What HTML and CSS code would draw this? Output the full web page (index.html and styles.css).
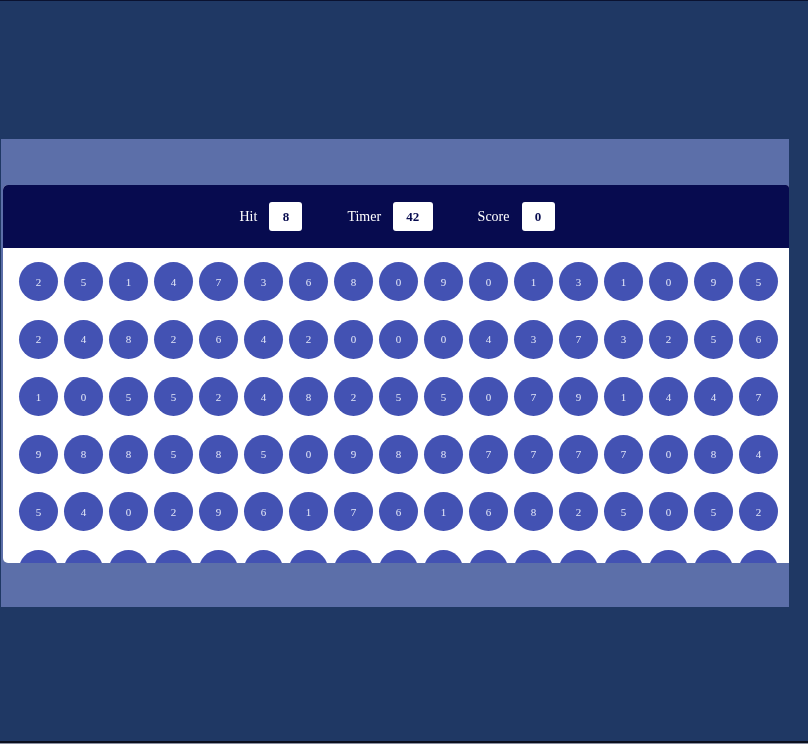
FILE: index.html
```html
<!DOCTYPE html>
<html lang="en">
<head>
  <meta charset="UTF-8">
  <title>Bubble Game</title>
  <link rel="stylesheet" href="styles.css">
</head>
<body>

  <div class="band">
    <div class="panel">
      <div class="top">
        <div class="stat">Hit <span class="val">8</span></div>
        <div class="stat">Timer <span class="val">42</span></div>
        <div class="stat">Score <span class="val">0</span></div>
      </div>
      <div class="bubbles">
        <div class="bubble">2</div><div class="bubble">5</div><div class="bubble">1</div><div class="bubble">4</div><div class="bubble">7</div><div class="bubble">3</div><div class="bubble">6</div><div class="bubble">8</div><div class="bubble">0</div><div class="bubble">9</div><div class="bubble">0</div><div class="bubble">1</div><div class="bubble">3</div><div class="bubble">1</div><div class="bubble">0</div><div class="bubble">9</div><div class="bubble">5</div>
        <div class="bubble">2</div><div class="bubble">4</div><div class="bubble">8</div><div class="bubble">2</div><div class="bubble">6</div><div class="bubble">4</div><div class="bubble">2</div><div class="bubble">0</div><div class="bubble">0</div><div class="bubble">0</div><div class="bubble">4</div><div class="bubble">3</div><div class="bubble">7</div><div class="bubble">3</div><div class="bubble">2</div><div class="bubble">5</div><div class="bubble">6</div>
        <div class="bubble">1</div><div class="bubble">0</div><div class="bubble">5</div><div class="bubble">5</div><div class="bubble">2</div><div class="bubble">4</div><div class="bubble">8</div><div class="bubble">2</div><div class="bubble">5</div><div class="bubble">5</div><div class="bubble">0</div><div class="bubble">7</div><div class="bubble">9</div><div class="bubble">1</div><div class="bubble">4</div><div class="bubble">4</div><div class="bubble">7</div>
        <div class="bubble">9</div><div class="bubble">8</div><div class="bubble">8</div><div class="bubble">5</div><div class="bubble">8</div><div class="bubble">5</div><div class="bubble">0</div><div class="bubble">9</div><div class="bubble">8</div><div class="bubble">8</div><div class="bubble">7</div><div class="bubble">7</div><div class="bubble">7</div><div class="bubble">7</div><div class="bubble">0</div><div class="bubble">8</div><div class="bubble">4</div>
        <div class="bubble">5</div><div class="bubble">4</div><div class="bubble">0</div><div class="bubble">2</div><div class="bubble">9</div><div class="bubble">6</div><div class="bubble">1</div><div class="bubble">7</div><div class="bubble">6</div><div class="bubble">1</div><div class="bubble">6</div><div class="bubble">8</div><div class="bubble">2</div><div class="bubble">5</div><div class="bubble">0</div><div class="bubble">5</div><div class="bubble">2</div>
        <!-- last row is cut by the panel, its numbers don't show -->
        <div class="bubble"></div><div class="bubble"></div><div class="bubble"></div><div class="bubble"></div><div class="bubble"></div><div class="bubble"></div><div class="bubble"></div><div class="bubble"></div><div class="bubble"></div><div class="bubble"></div><div class="bubble"></div><div class="bubble"></div><div class="bubble"></div><div class="bubble"></div><div class="bubble"></div><div class="bubble"></div><div class="bubble"></div>
      </div>
    </div>
  </div>

</body>
</html>
```

FILE: styles.css
```css
html {
  background-color: #8a8fa0;
}

body {
  margin: 0;
  height: 743px;
  box-sizing: border-box;
  padding: 138px 19px 0 1px;
  overflow: hidden;
  background-color: #1f3864;
  border-top: 1px solid #0a1230;
  border-bottom: 2px solid #0a0f1e;
  font-family: "Liberation Serif", "Times New Roman", serif;
}

.band {
  height: 468px;
  box-sizing: border-box;
  padding: 46px 0 44px 2px;
  background-color: #5c6fa9;
  filter: blur(0.5px);
}

.panel {
  height: 378px;
  border-radius: 5px 3px 0 5px;
  overflow: hidden;
  background-color: #ffffff;
}

.top {
  height: 63px;
  display: flex;
  align-items: center;
  justify-content: center;
  gap: 45px;
  padding-left: 2px;
  background-color: #070b4f;
  color: #ffffff;
  font-size: 14px;
}

.stat {
  display: flex;
  align-items: center;
  gap: 12px;
}

.val {
  height: 29px;
  line-height: 29px;
  padding: 0 13.25px;
  border-radius: 3px;
  background-color: #ffffff;
  color: #070b4f;
  font-size: 13px;
  font-weight: bold;
}

.bubbles {
  display: grid;
  grid-template-columns: repeat(17, 39px);
  grid-auto-rows: 39px;
  column-gap: 6px;
  row-gap: 18.5px;
  padding: 14px 0 0 16px;
}

.bubble {
  display: flex;
  align-items: center;
  justify-content: center;
  border-radius: 50%;
  background-color: #4352b3;
  color: #e4e8f8;
  font-size: 11px;
}
```
